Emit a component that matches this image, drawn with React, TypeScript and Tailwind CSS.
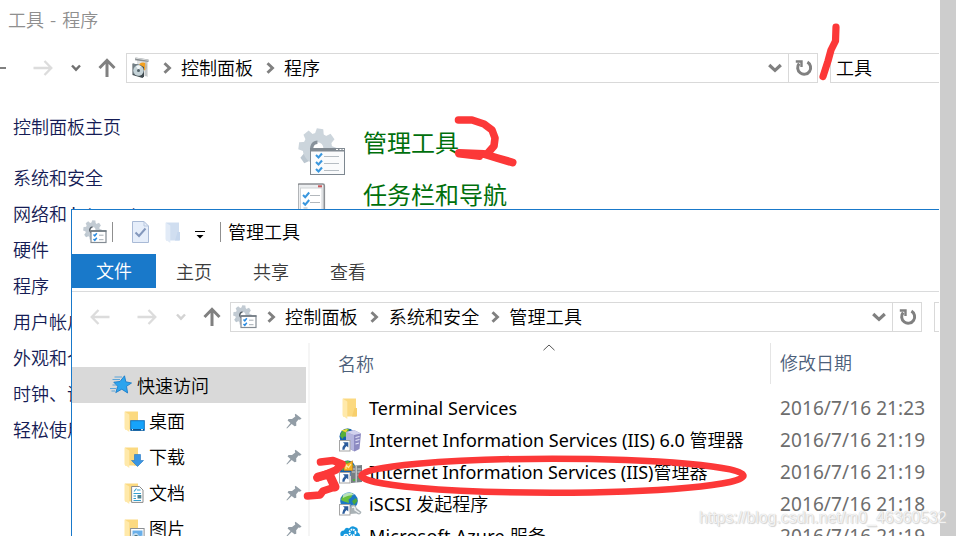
import React from "react";

type IconProps = { className?: string };

const CJK = "font-['Noto_Sans_CJK_SC',sans-serif] font-[350]";

/* ---------- arrows ---------- */

function ArrowRight({ className = "" }: IconProps) {
  return (
    <svg width="20" height="16" viewBox="0 0 20 16" fill="none" stroke="currentColor" strokeWidth="2.3" className={className}>
      <path d="M0.5 8H18M11.5 1L18.3 8L11.5 15" />
    </svg>
  );
}

function ArrowUp({ className = "" }: IconProps) {
  return (
    <svg width="18" height="20" viewBox="0 0 18 20" fill="none" stroke="#808080" strokeWidth="3" className={className}>
      <path d="M9 19V3M1.5 10L9 2.3L16.5 10" />
    </svg>
  );
}

function Crumb({ className = "" }: IconProps) {
  return (
    <svg width="9" height="12" viewBox="0 0 9 12" fill="none" stroke="#808080" strokeWidth="2.9" className={className}>
      <path d="M1.5 1.2L6.5 6L1.5 10.8" />
    </svg>
  );
}

function Caret({ className = "" }: IconProps) {
  return (
    <svg width="10" height="8" viewBox="0 0 10 8" fill="none" stroke="currentColor" strokeWidth="2.4" className={className}>
      <path d="M1 1.5L5 5.7L9 1.5" />
    </svg>
  );
}

function BoxCaret({ className = "" }: IconProps) {
  return (
    <svg width="14" height="10" viewBox="0 0 14 10" fill="none" stroke="#808080" strokeWidth="3.2" className={className}>
      <path d="M1.2 2L7 7.4L12.8 2" />
    </svg>
  );
}

function Refresh() {
  return (
    <svg width="18" height="18" viewBox="0 0 18 18" fill="none" stroke="#808080" strokeWidth="3" className="ml-[2px]">
      <path d="M12.4 3.1A6.5 6.5 0 1 1 4.2 4.5" />
      <path d="M0.8 2.5H6.5V8" strokeWidth="2.4" />
    </svg>
  );
}

/* ---------- system icons ---------- */

const TEETH = [0, 45, 90, 135, 180, 225, 270, 315];

function GearShape({ light = "#ccd5dc", dark = "#87919a" }: { light?: string; dark?: string }) {
  return (
    <g>
      {TEETH.map((a) => (
        <path key={a} d="M13.5 7L15 0.5H21L22.5 7Z" fill={a > 90 && a < 270 ? "#bcc7d0" : light} transform={`rotate(${a + 8} 18 18)`} />
      ))}
      <circle cx="18" cy="18" r="9.6" fill="none" stroke={light} strokeWidth="8" />
      <path d="M18 12.5a5.5 5.5 0 0 0-3 10" fill="none" stroke={dark} strokeWidth="3" />
    </g>
  );
}

function AdminToolsLarge() {
  return (
    <svg width="48" height="48" viewBox="0 0 48 48">
      <g transform="scale(1.08 1.14)">
        <GearShape />
      </g>
      <rect x="12.5" y="20.5" width="34" height="26" fill="#fafbfc" stroke="#7d8790" />
      <path d="M12 20h35v3.5H12z" fill="#818a92" />
      <path d="M38 21.5h2M41.5 21.5h2M44.5 21.5h1.5" stroke="#fff" />
      <path d="M18 27l2.5 2.5 3.5-4M18 34l2.5 2.5 3.500-4M18 41l2.5 2.5 3.5-4" fill="none" stroke="#3a97de" strokeWidth="2.1" />
      <path d="M26 28.5h15M26 35.5h15M26 42.5h15" stroke="#b6bdc3" />
    </svg>
  );
}

function AdminTools({ className = "" }: IconProps) {
  return (
    <svg width="24" height="24" viewBox="0 0 24 24" className={className}>
      <g transform="scale(0.53 0.56)">
        <GearShape dark="#5c656d" light="#c2cbd3" />
      </g>
      <rect x="8" y="11" width="15" height="11.5" fill="#fff" stroke="#838b93" strokeWidth="1.2" />
      <path d="M7.5 11H23.5" stroke="#6f7880" strokeWidth="1.6" />
      <path d="M10.5 14.5l1.3 1.3 2-2.5M10.5 19l1.3 1.3 2-2.5" fill="none" stroke="#2a8be0" strokeWidth="1.5" />
      <path d="M16 15.2h4.5M16 19.7h4.5" stroke="#a5adb4" />
    </svg>
  );
}

function TaskbarIcon() {
  return (
    <svg width="30" height="34" viewBox="0 0 30 34">
      <rect x="-0.2" y="1" width="26.500" height="34" rx="1.5" fill="#eceef0" stroke="#8c8f93" strokeWidth="1.6" />
      <rect x="2.5" y="5" width="21.5" height="28" fill="#fff" stroke="#d0d3d6" />
      <rect x="20" y="2.3" width="4" height="2" fill="#c9595c" />
      <path d="M5 12l2.2 2.2 4-4.7M5 19.5l2.2 2.2 4-4.7" fill="none" stroke="#3a97de" strokeWidth="2" />
      <path d="M12 12.5h10M12 19.5h10M5.5 25h4" stroke="#b3b8bd" />
    </svg>
  );
}

function ProgramsIcon({ className = "" }: IconProps) {
  return (
    <svg width="18" height="22" viewBox="0 0 18 22" className={className}>
      <path d="M5 1.5L16 4V20L5 17Z" fill="#dfe1e2" />
      <path d="M3.5 0.5L16.5 2.5V5L3 3.2Z" fill="#8a8f92" />
      <path d="M4 1.2L16 3.2" stroke="#e3e6e7" strokeWidth="0.9" />
      <circle cx="11" cy="9.5" r="4" fill="#f3a01f" />
      <path d="M14 5V19" stroke="#bcc0c2" strokeWidth="1.5" />
      <path d="M0.5 6.5L8 8L12 10V19.5L10.5 21L0.5 18Z" fill="#414b50" />
      <path d="M1 6.5L8 8V19L1.2 17Z" fill="#738087" />
      <circle cx="6.5" cy="13.5" r="5.2" fill="#c5d3d8" />
      <path d="M6.5 13.5L4 8.9A5.2 5.2 0 0 1 9 9Z" fill="#f2f7f8" />
      <circle cx="6.5" cy="13.5" r="1.5" fill="#526269" />
    </svg>
  );
}

function FolderBase({ pale = false }: { pale?: boolean }) {
  return (
    <g>
      <path d="M1 0.5H14V18.5H1Z" fill={pale ? "#d0def0" : "#fbd980"} />
      <path d="M12.5 10H15V18.5H10Z" fill={pale ? "#c6d7ed" : "#f7cf6c"} />
      <path d="M0.5 0.5L5.3 3.5V21L0.5 17.5Z" fill={pale ? "#e2ebf7" : "#ffe9aa"} />
    </g>
  );
}

function Folder({ pale = false, className = "" }: IconProps & { pale?: boolean }) {
  return (
    <svg width="15" height="21" viewBox="0 0 15 21" className={className}>
      <FolderBase pale={pale} />
    </svg>
  );
}

type PlaceKind = "desktop" | "downloads" | "documents" | "pictures";

function PlaceIcon({ kind }: { kind: PlaceKind }) {
  return (
    <svg width="21" height="21" viewBox="0 0 21 21" className="shrink-0">
      <FolderBase />
      {kind === "desktop" && (
        <g>
          <rect x="6.7" y="9.7" width="13.6" height="9.6" fill="#16a3fb" stroke="#1672bd" />
          <path d="M7 18.8H20" stroke="#0c4f8b" strokeWidth="1.5" />
          <path d="M8 18.7h1M17 18.7h2" stroke="#fff" />
        </g>
      )}
      {kind === "downloads" && <path d="M10.5 7.5h6v6h3L13.5 19.5L7.5 13.5h3Z" fill="#3a95e2" stroke="#2276c2" strokeWidth="0.6" />}
      {kind === "documents" && (
        <g>
          <path d="M7.6 3.5H15.5L19 7V19.4H7.6Z" fill="#fff" stroke="#8b8b8b" />
          <path d="M10 8.5L12.5 5.5M13 7H16.5M9.5 10.5H17M9.5 13H12M9.5 15.5H12M9.5 17.5H17" stroke="#35a0cf" strokeWidth="1.1" />
          <path d="M13.5 12h3.8v3.5h-3.8z" fill="#4b8292" />
        </g>
      )}
      {kind === "pictures" && (
        <g>
          <rect x="6.6" y="9.5" width="13.5" height="12" fill="#fff" stroke="#8b8f94" />
          <path d="M8.5 11.5H18.5V21H8.5Z" fill="#69afe9" />
          <path d="M8.5 16Q12 12.5 14 15.5T18.5 16V21H8.5Z" fill="#c3dcef" />
          <path d="M8.5 17.5L12 16L18.5 18.5V21H8.5Z" fill="#315b62" />
        </g>
      )}
    </svg>
  );
}

function QuickStar() {
  return (
    <svg width="22" height="20" viewBox="0 0 22 20" className="shrink-0">
      <path d="M14.5 0.8L15.8 6.8L21.5 8L16.5 11.3L17.6 18L11.8 14.2L5.8 17.6L7.7 11.3L3.8 7.2L10 6.5Z" fill="#2ba4ee" stroke="#1b7dc9" strokeWidth="0.9" />
      <path d="M4.5 2H12M2.5 4.5H10M0 13.5H6M1.5 16H5M2.5 10H7" stroke="#4f9fd9" strokeWidth="0.9" />
    </svg>
  );
}

function Pin() {
  return (
    <svg width="16" height="16" viewBox="0 0 16 16" className="shrink-0">
      <path d="M9.5 0.8L15.6 5.4L13.9 6.7L12.5 6.5L10.2 9.3L10.3 12.8L8.6 13.3L5.7 11L1 15.6L0.4 15L4.5 10L1.6 7.5L2.5 6L6 5.9L9.3 3.6L8.8 1.8Z" fill="#929da6" />
    </svg>
  );
}

function Shortcut() {
  return (
    <g>
      <rect x="0.5" y="12.5" width="10.5" height="10.5" fill="#fff" stroke="#a5a5a5" />
      <path d="M4 14.3H9.3V19.5L7.6 17.9Q5.5 19.3 5.5 21.7H3.3Q3.1 18.5 5.7 16Z" fill="#2c5c9c" />
    </g>
  );
}

function Globe() {
  return (
    <g>
      <circle cx="8.5" cy="8.5" r="8" fill="#1560b0" />
      <path d="M2.5 4Q6 0 10.5 1L9 4L11 5.5L8 9L5 8.5L3.5 11L1 8Z" fill="#58ae39" />
      <path d="M12 3L15.5 5.5L16 9L13 8Z" fill="#74bc4a" />
    </g>
  );
}

type FileKind = "folder" | "iis6" | "iis" | "iscsi" | "azure";

function FileIcon({ kind }: { kind: FileKind }) {
  if (kind === "folder") return <Folder className="ml-[3px]" />;
  if (kind === "azure")
    return (
      <svg width="23" height="24" viewBox="0 0 23 24" className="shrink-0">
        <path d="M5.5 17Q0.5 17 1.8 12Q0 7 5 6.5Q6.500 2.5 10 4.500Q13 1 16 3Q20 4 18.500 8Q22 10 21 14Q20.5 17 17 17Z" fill="#1597dc" />
        <circle cx="13.500" cy="8.5" r="3" fill="none" stroke="#fff" strokeWidth="1.8" strokeDasharray="1.6 0.8" />
        <circle cx="7" cy="12.5" r="2" fill="none" stroke="#fff" strokeWidth="1.5" />
      </svg>
    );
  return (
    <svg width="24" height="24" viewBox="0 0 24 24" className="shrink-0">
      {kind !== "iscsi" && <Globe />}
      {kind === "iis6" && (
        <g>
          <path d="M7 4L15 2L22 5.5L20.5 21L15.5 23.5L7 19Z" fill="#8d8bc2" />
          <path d="M7 4L15 7V23L7 19Z" fill="#b5b5de" />
          <path d="M7 4L15 2L22 5.5L15 7Z" fill="#d2d2ee" />
          <path d="M16.5 9.5L20.5 8.5M16.5 12.5L20.5 11.5M16.5 16L20 15" stroke="#e6e6fa" strokeWidth="1.2" />
          <path d="M2 2.5L9 0.8L7 4.5L5 3.6Z" fill="#f1d73a" />
        </g>
      )}
      {kind === "iis" && (
        <g>
          <path d="M12 6L23 5V22L12 23Z" fill="#777f84" />
          <path d="M17.2 6V23" stroke="#d3d7d9" strokeWidth="1.2" />
          <path d="M13 9H16M13 12H16M18.5 9H22M18.5 12H22M18.5 15H22" stroke="#cbd0d2" />
          <path d="M14 20H16M19.5 18.5H21.5" stroke="#4db33c" strokeWidth="2" />
          <path d="M5 1.5L7.5 4L10.5 2.5L13.5 0.8V10.5H5Z" fill="#f5b01e" stroke="#c77c0f" strokeWidth="0.6" />
          <path d="M7 9V5L9.5 7.5L12 4" fill="none" stroke="#fde9a4" strokeWidth="1.2" />
        </g>
      )}
      {kind === "iscsi" && (
        <g>
          <circle cx="10" cy="9" r="8.8" fill="#1c78c4" />
          <path d="M3 5Q8 -0.500 14 1.500L12.5 5L9.500 7.500L10 11L5 9.500L2 8Z" fill="#68bf3e" />
          <path d="M13 9L17 6L18.500 9L15 13Z" fill="#4ba83d" />
          <path d="M4 2.5Q10 -1.500 15.500 3Q9 3 4 6Z" fill="#d3efd9" opacity="0.75" />
          <path d="M12.500 13Q17 11.500 17.500 16L22.500 20Q21.500 24 17.500 21.500L11 22L10 17Z" fill="#a9b2b6" />
          <path d="M13 15.500Q16.500 14 16 18L20.500 21" fill="none" stroke="#eff2f3" strokeWidth="1.5" />
        </g>
      )}
      <Shortcut />
    </svg>
  );
}

/* ---------- data ---------- */

const CONTROL_LINKS = ["系统和安全", "网络和 Internet", "硬件", "程序", "用户帐户", "外观和个性化", "时钟、语言和区域", "轻松使用"];

const PLACES: { kind: PlaceKind; label: string }[] = [
  { kind: "desktop", label: "桌面" },
  { kind: "downloads", label: "下载" },
  { kind: "documents", label: "文档" },
  { kind: "pictures", label: "图片" },
];

const FILES: { kind: FileKind; latin: string; cjk: string; date: string; track: string }[] = [
  { kind: "folder", latin: "Terminal Services", cjk: "", date: "2016/7/16 21:23", track: "tracking-[0.07px]" },
  { kind: "iis6", latin: "Internet Information Services (IIS) 6.0 ", cjk: "管理器", date: "2016/7/16 21:19", track: "tracking-[-0.02px]" },
  { kind: "iis", latin: "Internet Information Services (IIS)", cjk: "管理器", date: "2016/7/16 21:19", track: "tracking-[-0.06px]" },
  { kind: "iscsi", latin: "iSCSI ", cjk: "发起程序", date: "2016/7/16 21:18", track: "tracking-[0.1px]" },
  { kind: "azure", latin: "Microsoft Azure ", cjk: "服务", date: "2016/7/16 21:19", track: "tracking-[0.2px]" },
];

/* ---------- windows ---------- */

function ProgramsWindow() {
  return (
    <div className="h-[536px] w-[940px] shrink-0 overflow-hidden bg-white">
      <div className="h-[53px] pl-[8px] pt-[6px] leading-[26px] text-[#8f8f8f] [word-spacing:2px]">工具 - 程序</div>
      <div className="flex h-[30px] items-center">
        <div className="h-[2px] w-[6px] bg-[#808080]" />
        <ArrowRight className="ml-[27px] text-[#dcdcdc]" />
        <Caret className="ml-[18px] text-[#707070]" />
        <ArrowUp className="ml-[17px]" />
        <div className="ml-[10px] flex h-[30px] w-[663px] items-center border border-[#d9d9d9]">
          <ProgramsIcon className="ml-[5px]" />
          <Crumb className="ml-[13px]" />
          <span className="-mt-[2px] ml-[9px]">控制面板</span>
          <Crumb className="ml-[13px]" />
          <span className="-mt-[2px] ml-[9px]">程序</span>
          <BoxCaret className="ml-auto mr-[6px]" />
        </div>
        <div className="flex h-[30px] w-[29px] items-center justify-center border-y border-r border-[#d9d9d9]">
          <Refresh />
        </div>
        <div className="ml-[12px] h-[30px] w-[109px] border-y border-l border-[#d9d9d9] pl-[5px] leading-[27px]">工具</div>
      </div>
      <div className="flex">
        <div className="w-[298px] pl-[13px] pt-[26px] text-[#151c55]">
          <div className="h-[36px] leading-[35px]">控制面板主页</div>
          <ul className="mt-[15px]">
            {CONTROL_LINKS.map((t) => (
              <li key={t} className="h-[36px] leading-[35px]">
                {t}
              </li>
            ))}
          </ul>
        </div>
        <div className="pt-[34px] text-[24px] text-[#00700c]">
          <div className="flex h-[66px] items-start">
            <div className="pt-[11px]">
              <AdminToolsLarge />
            </div>
            <span className="ml-[17px] mt-[7px] font-normal leading-[36px]">管理工具</span>
          </div>
          <div className="flex items-start">
            <TaskbarIcon />
            <span className="-mt-[7px] ml-[35px] font-normal leading-[36px]">任务栏和导航</span>
          </div>
        </div>
      </div>
    </div>
  );
}

function AdminWindow() {
  return (
    <div className="absolute left-[71px] top-[209px] h-[327px] w-[868px] overflow-hidden border-l border-t border-[#1979ca] bg-white">
      <div className="flex h-[44px] items-center">
        <AdminTools className="ml-[11px]" />
        <div className="ml-[5px] h-[20px] w-px bg-[#8f8f8f]" />
        <svg width="17" height="22" viewBox="0 0 17 22" className="ml-[19px]">
          <path d="M0.5 0.5H12L16.5 5V21.5H0.5Z" fill="#e6eefa" stroke="#a9bad6" />
          <path d="M12 0.5V5H16.5" fill="none" stroke="#b9c8df" />
          <path d="M3.5 11.5L7 15L13.5 7.5" fill="none" stroke="#8498bc" strokeWidth="2" />
        </svg>
        <Folder pale className="ml-[16px]" />
        <svg width="10" height="8" viewBox="0 0 10 8" className="ml-[15px] mt-[5px]">
          <path d="M0 0.5H10" stroke="#000" />
          <path d="M1.500 4H8.5L5 7.5Z" fill="#000" />
        </svg>
        <div className="ml-[15px] h-[20px] w-px bg-[#8f8f8f]" />
        <span className="-mt-[2px] ml-[7px]">管理工具</span>
      </div>
      <div className="flex h-[38px] items-start border-b border-[#dadbdc] text-[#3b3b3b]">
        <span className="h-[34px] w-[84px] bg-[#1979ca] text-center leading-[33px] text-white">文件</span>
        <span className="ml-[20px] leading-[35px]">主页</span>
        <span className="ml-[41px] leading-[35px]">共享</span>
        <span className="ml-[41px] leading-[35px]">查看</span>
      </div>
      <div className="mt-[10px] flex h-[30px] items-center">
        <ArrowRight className="ml-[18px] rotate-180 text-[#dcdcdc]" />
        <ArrowRight className="ml-[27px] text-[#dcdcdc]" />
        <Caret className="ml-[19px] text-[#d3d3d3]" />
        <ArrowUp className="ml-[17px]" />
        <div className="ml-[9px] flex h-[30px] w-[663px] items-center border border-[#d9d9d9]">
          <AdminTools className="ml-[2px]" />
          <Crumb className="ml-[10px]" />
          <span className="-mt-[3px] ml-[9px] tracking-[0.2px]">控制面板</span>
          <Crumb className="ml-[12px]" />
          <span className="-mt-[3px] ml-[10px] tracking-[0.1px]">系统和安全</span>
          <Crumb className="ml-[12px]" />
          <span className="-mt-[3px] ml-[9px] tracking-[0.2px]">管理工具</span>
          <BoxCaret className="ml-auto mr-[6px]" />
        </div>
        <div className="flex h-[30px] w-[29px] items-center justify-center border-y border-r border-[#d9d9d9]">
          <Refresh />
        </div>
        <div className="ml-[12px] h-[30px] w-[5px] border-y border-l border-[#d9d9d9]" />
      </div>
      <div className="flex h-[204px] pt-[11px]">
        <nav className="w-[236px] shrink-0 pt-[24px]">
          <div className="flex h-[36px] w-[234px] items-center bg-[#d9d9d9] pl-[38px]">
            <QuickStar />
            <span className="ml-[5px]">快速访问</span>
          </div>
          {PLACES.map((p) => (
            <div key={p.label} className="flex h-[36px] w-[234px] items-center pl-[52px] pr-[4px]">
              <PlaceIcon kind={p.kind} />
              <span className="-mt-[2px] ml-[4px]">{p.label}</span>
              <span className="ml-auto">
                <Pin />
              </span>
            </div>
          ))}
        </nav>
        <div className="h-[204px] w-[2px] shrink-0 bg-[#f5f5f5]" />
        <div className="w-[629px] shrink-0">
          <div className="flex h-[41px] text-[#4c607a]">
            <div className="flex h-[41px] w-[460px] items-center pl-[28px]">
              <span className="-mt-[2px]">名称</span>
              <svg width="12" height="7" viewBox="0 0 12 7" fill="none" stroke="#555" className="ml-[169px] mt-px self-start">
                <path d="M0.5 6.2L6 1L11.5 6.2" />
              </svg>
            </div>
            <div className="h-[41px] border-l border-[#e5e5e5] pl-[9px] leading-[39px]">修改日期</div>
          </div>
          <div className="pt-[8px]">
            {FILES.map((f) => (
              <div key={f.latin} className="flex h-[32px] items-center">
                <div className="flex w-[470px] items-center pl-[29px]">
                  <div className="w-[23px] shrink-0">
                    <FileIcon kind={f.kind} />
                  </div>
                  <span className="-mt-[2px] ml-[7px] whitespace-pre leading-[32px]">
                    <span className={`font-['Noto_Sans',sans-serif] text-[18px] font-normal ${f.track}`}>{f.latin}</span>
                    {f.cjk}
                  </span>
                </div>
                <span className="font-['Noto_Sans',sans-serif] text-[19px] font-normal leading-[32px] tracking-[0.1px] text-[#6d6d6d]">{f.date}</span>
              </div>
            ))}
          </div>
        </div>
      </div>
    </div>
  );
}

function Markup() {
  return (
    <svg width="956" height="536" viewBox="0 0 956 536" className="absolute left-0 top-0" fill="none" stroke="#fc3838" strokeLinecap="round" strokeLinejoin="round">
      <path d="M836 27L835.5 41L831 50L828 61L823 76.5" strokeWidth="7.2" />
      <path d="M458.500 120H472L484 124L492 130L495 138L494 146L487 154" strokeWidth="7.6" />
      <path d="M459 153L484 154L497 158L512.5 162.5" strokeWidth="8" />
      <path d="M459 154.5L480 157" strokeWidth="6" />
      <path d="M320.500 462L333 460.500L342 464L336 470L317 478" strokeWidth="7.600" />
      <path d="M318 477L329 474L335 487" strokeWidth="9" />
      <path d="M335 487L323 491L320 495L307.500 496" strokeWidth="7.600" />
      <ellipse cx="552.5" cy="475.7" rx="191" ry="17" strokeWidth="6.5" />
    </svg>
  );
}

export default function App() {
  return (
    <div className={`relative flex h-[536px] w-[956px] overflow-hidden bg-[#cdcdcd] text-[18px] leading-[26px] text-black ${CJK}`}>
      <ProgramsWindow />
      <AdminWindow />
      <Markup />
      <div className="absolute left-[699px] top-[507px] whitespace-nowrap font-['Liberation_Sans',sans-serif] text-[16px] font-normal leading-[22px] tracking-[-0.07px] text-white/80 [text-shadow:0_0_1px_#b8b8b8,1px_1px_1px_#d4d4d4]">
        https://blog.csdn.net/m0_46360532
      </div>
    </div>
  );
}
